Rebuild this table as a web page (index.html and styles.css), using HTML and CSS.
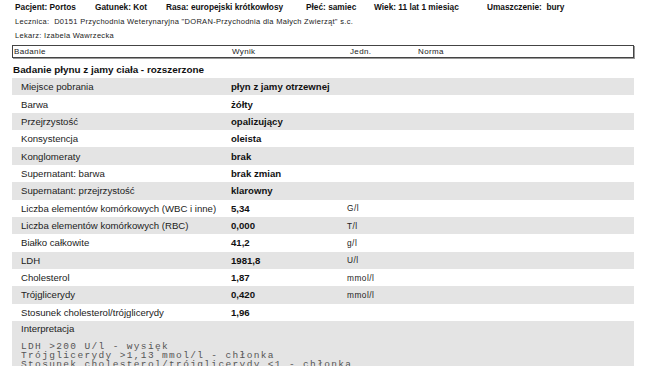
FILE: index.html
```html
<!DOCTYPE html>
<html lang="pl">
<head>
<meta charset="utf-8">
<link rel="stylesheet" href="styles.css">
</head>
<body>
<div class="page">
  <div class="patient">
    <span class="p-pacjent">Pacjent: Portos</span>
    <span class="p-gatunek">Gatunek: Kot</span>
    <span class="p-rasa">Rasa: europejski krótkowłosy</span>
    <span class="p-plec">Płeć: samiec</span>
    <span class="p-wiek">Wiek: 11 lat 1 miesiąc</span>
    <span class="p-umasz">Umaszczenie:&nbsp; bury</span>
  </div>
  <div class="info info-first">Lecznica:&nbsp; D0151 Przychodnia Weterynaryjna "DORAN-Przychodnia dla Małych Zwierząt" s.c.</div>
  <div class="info">Lekarz: Izabela Wawrzecka</div>
  <div class="thead">
    <span class="c-label">Badanie</span>
    <span class="c-wynik">Wynik</span>
    <span class="c-jedn">Jedn.</span>
    <span class="c-norma">Norma</span>
  </div>
  <div class="section">Badanie płynu z jamy ciała - rozszerzone</div>
  <div class="rows">
    <div class="row"><span class="label">Miejsce pobrania</span><span class="val">płyn z jamy otrzewnej</span><span class="unit"></span></div>
    <div class="row"><span class="label">Barwa</span><span class="val">żółty</span><span class="unit"></span></div>
    <div class="row"><span class="label">Przejrzystość</span><span class="val">opalizujący</span><span class="unit"></span></div>
    <div class="row"><span class="label">Konsystencja</span><span class="val">oleista</span><span class="unit"></span></div>
    <div class="row"><span class="label">Konglomeraty</span><span class="val">brak</span><span class="unit"></span></div>
    <div class="row"><span class="label">Supernatant: barwa</span><span class="val">brak zmian</span><span class="unit"></span></div>
    <div class="row"><span class="label">Supernatant: przejrzystość</span><span class="val">klarowny</span><span class="unit"></span></div>
    <div class="row"><span class="label">Liczba elementów komórkowych (WBC i inne)</span><span class="val">5,34</span><span class="unit">G/l</span></div>
    <div class="row"><span class="label">Liczba elementów komórkowych (RBC)</span><span class="val">0,000</span><span class="unit">T/l</span></div>
    <div class="row"><span class="label">Białko całkowite</span><span class="val">41,2</span><span class="unit">g/l</span></div>
    <div class="row"><span class="label">LDH</span><span class="val">1981,8</span><span class="unit">U/l</span></div>
    <div class="row"><span class="label">Cholesterol</span><span class="val">1,87</span><span class="unit">mmol/l</span></div>
    <div class="row"><span class="label">Trójglicerydy</span><span class="val">0,420</span><span class="unit">mmol/l</span></div>
    <div class="row"><span class="label">Stosunek cholesterol/trójglicerydy</span><span class="val">1,96</span><span class="unit"></span></div>
    <div class="interp">
      <div class="interp-title">Interpretacja</div>
      <pre class="interp-text">LDH &gt;200 U/l - wysięk
Trójglicerydy &gt;1,13 mmol/l - chłonka
Stosunek cholesterol/trójglicerydy &lt;1 - chłonka</pre>
    </div>
  </div>
</div>
</body>
</html>
```

FILE: styles.css
```css
html, body {
  margin: 0;
  padding: 0;
  background: #fff;
  overflow: hidden;
}
body {
  font-family: "Liberation Sans", Arial, sans-serif;
  color: #111;
}
.page {
  width: 650px;
  height: 366px;
  padding: 1px 16px 0 12px;
  box-sizing: border-box;
  overflow: hidden;
}
.patient {
  display: flex;
  font-size: 8.3px;
  font-weight: bold;
  height: 12px;
  line-height: 12px;
  padding-left: 3px;
}
.patient span { display: block; white-space: nowrap; }
.p-pacjent { width: 80px; }
.p-gatunek { width: 71px; }
.p-rasa { width: 140px; }
.p-plec { width: 68px; }
.p-wiek { width: 113px; }
.info {
  font-size: 7.5px;
  height: 13.5px;
  line-height: 13.5px;
  padding-left: 3px;
  letter-spacing: 0.3px;
  color: #222;
}
.info-first { margin-top: 2px; }
.thead {
  display: grid;
  grid-template-columns: 218px 118px 68px 1fr;
  border: 1px solid #444;
  height: 11px;
  line-height: 11px;
  font-size: 8px;
  letter-spacing: 0.35px;
  margin-top: 3px;
  padding-left: 1px;
  box-shadow: 1px 1px 0 #999;
  color: #222;
}
.section {
  font-size: 9.9px;
  font-weight: bold;
  height: 20px;
  line-height: 16px;
  padding-top: 4px;
  box-sizing: border-box;
  padding-left: 1px;
}
.rows { display: flex; flex-direction: column; }
.row {
  display: grid;
  grid-template-columns: 210px 116px 1fr;
  height: 17.36px;
  align-items: center;
  padding-left: 9px;
}
.row:nth-child(odd) { background: #e4e4e4; }
.label { font-size: 9.6px; color: #222; white-space: nowrap; }
.val { font-size: 9.6px; font-weight: bold; white-space: nowrap; }
.unit { font-size: 8.3px; letter-spacing: 0.5px; color: #222; }
.interp {
  background: #e4e4e4;
  padding: 2px 0 0 9px;
  height: 60px;
}
.interp-title { font-size: 9.6px; color: #222; line-height: 12px; }
.interp-text {
  margin: 7px 0 0;
  font-family: "Liberation Mono", "Courier New", monospace;
  font-size: 9.5px;
  letter-spacing: 1.35px;
  line-height: 9px;
  color: #555;
}
```
